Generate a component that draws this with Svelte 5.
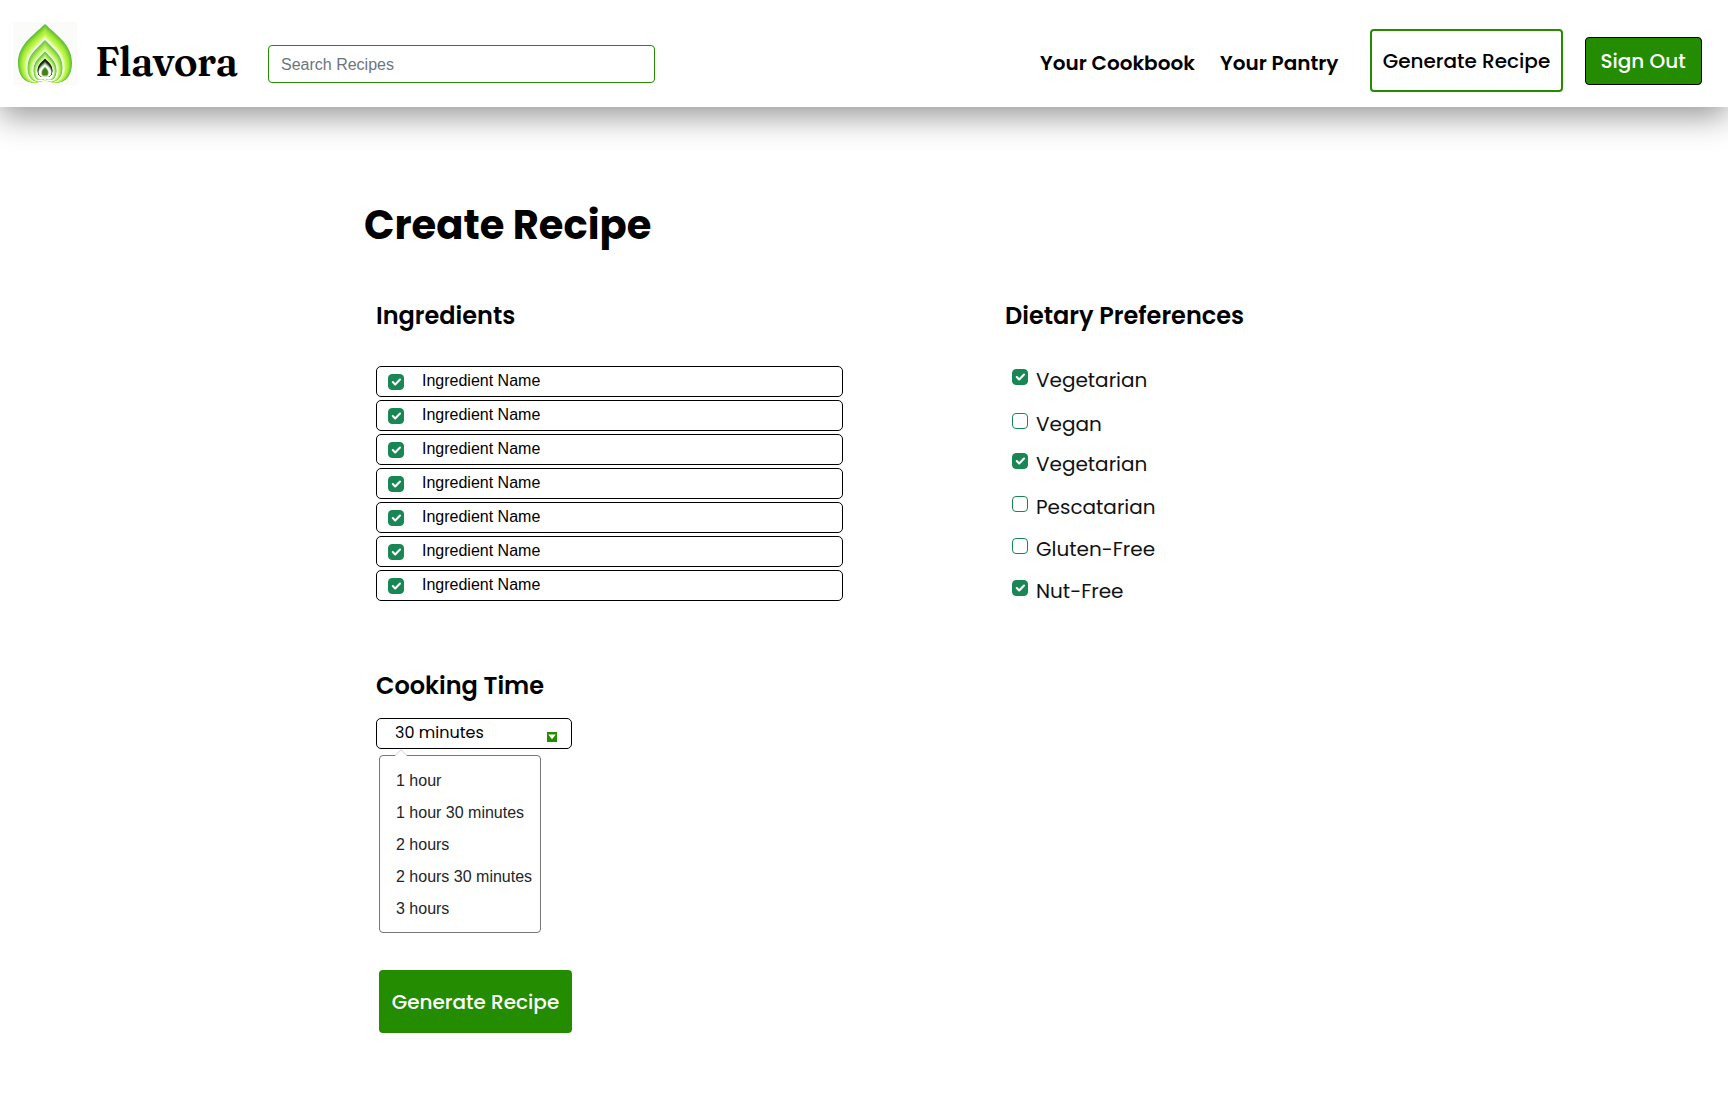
<script>
  const ingredients = Array(7).fill('Ingredient Name');
  const diets = [
    { name: 'Vegetarian', on: true },
    { name: 'Vegan', on: false },
    { name: 'Vegetarian', on: true },
    { name: 'Pescatarian', on: false },
    { name: 'Gluten-Free', on: false },
    { name: 'Nut-Free', on: true }
  ];
  const times = ['1 hour', '1 hour 30 minutes', '2 hours', '2 hours 30 minutes', '3 hours'];

  // Each petal fades from its outline colour to white: top, half width, bottom.
  const petals = [
    { top: 2, w: 27, bottom: 60.5, inTop: 17, inW: 18, inBottom: 60, stops: [[98, 188, 62], [160, 232, 50], [196, 250, 84], [255, 255, 255]] },
    { top: 18, w: 17.5, bottom: 59.5, inTop: 30, inW: 12, inBottom: 59, stops: [[110, 192, 80], [160, 230, 70], [205, 250, 130], [255, 255, 255]] },
    { top: 29.5, w: 11.5, bottom: 58, inTop: 37, inW: 8, inBottom: 57, stops: [[100, 186, 76], [150, 224, 76], [205, 244, 150], [255, 255, 255]] },
    { top: 36.5, w: 7.4, bottom: 54.5, inTop: 43, inW: 5.8, inBottom: 54.5, stops: [[28, 40, 22], [30, 42, 24], [150, 180, 130], [255, 255, 255]] },
    { top: 44.5, w: 3.6, bottom: 54, inTop: 48, inW: 1.5, inBottom: 52, stops: [[190, 225, 150], [90, 160, 40], [60, 125, 20], [70, 130, 30]] }
  ];
  const steps = 12;
  const layers = petals.flatMap((p) =>
    Array.from({ length: steps + 1 }, (_, i) => {
      const t = i / steps;
      const seg = Math.min(2, Math.floor(t * 3));
      const f = t * 3 - seg;
      const c = p.stops[seg].map((v, k) => Math.round(v + (p.stops[seg + 1][k] - v) * f));
      const top = p.top + (p.inTop - p.top) * t;
      const w = p.w + (p.inW - p.w) * t;
      const bottom = p.bottom + (p.inBottom - p.bottom) * t;
      return { fill: `rgb(${c.join(',')})`, transform: `translate(32 ${top}) scale(${w} ${bottom - top})` };
    })
  );
</script>

{#snippet check(on)}
  <span class="check" class:on>
    {#if on}
      <svg viewBox="0 0 20 20" width="16" height="16"><path d="M6 10l3 3 6-6" /></svg>
    {/if}
  </span>
{/snippet}

<header>
  <svg class="logo" viewBox="0 0 64 63" width="64" height="63">
    <rect width="64" height="63" fill="#fbfcfa" />
    {#each layers as l}
      <path d="M0 0C.5 .22 1 .36 1 .67C1 .88 .76 1 .46 1C.22 1 .06 .98 0 .95C-.06 .98 -.22 1 -.46 1C-.76 1 -1 .88 -1 .67C-1 .36 -.5 .22 0 0Z" fill={l.fill} transform={l.transform} />
    {/each}
  </svg>
  <span class="brand">Flavora</span>
  <div class="search">Search Recipes</div>
  <nav>
    <a class="cookbook" href="#cookbook">Your Cookbook</a>
    <a class="pantry" href="#pantry">Your Pantry</a>
    <button class="generate outline">Generate Recipe</button>
    <button class="signout">Sign Out</button>
  </nav>
</header>

<main>
  <h1>Create Recipe</h1>
  <div class="columns">
    <section class="left">
      <h2>Ingredients</h2>
      <ul class="ingredients">
        {#each ingredients as name}
          <li>{@render check(true)}<span>{name}</span></li>
        {/each}
      </ul>
      <h2 class="h-time">Cooking Time</h2>
      <div class="select">
        <span>30 minutes</span>
        <svg viewBox="0 0 10 10" width="10" height="10"><rect width="10" height="10" fill="#248c00" /><path d="M1.2 2.6h7.6L5 7.2z" fill="#fff" /></svg>
      </div>
      <div class="menu">
        <svg class="notch" viewBox="0 0 14 8" width="14" height="8"><path d="M1 7L7 1l6 6v1H1z" fill="#fff" /><path d="M1 6.6L7 .8l6 5.8" fill="none" stroke="#d0d0d0" /></svg>
        {#each times as time}<div>{time}</div>{/each}
      </div>
      <button class="generate solid">Generate Recipe</button>
    </section>
    <section>
      <h2>Dietary Preferences</h2>
      <ul class="diets">
        {#each diets as d}
          <li>{@render check(d.on)}<span>{d.name}</span></li>
        {/each}
      </ul>
    </section>
  </div>
</main>

<style>
  :global(body) { background: #fff; overflow: hidden; }
  :global(#app) { font-family: Poppins, Inter, sans-serif; color: #000; }
  header {
    display: flex; align-items: flex-start; box-sizing: border-box;
    height: 107px; padding: 0 26px 0 13px; background: #fff;
    box-shadow: 0 9px 30px rgba(0, 0, 0, 0.42);
  }
  .logo { margin-top: 22px; flex: none; }
  .brand {
    width: 173px; margin: 38px 0 0 18px; flex: none;
    font: 600 40px/48px Fraunces, "Liberation Serif", serif; letter-spacing: -0.75px;
  }
  .search {
    box-sizing: border-box; width: 387px; height: 38px; margin-top: 45px; padding: 1px 12px 0;
    border: 1px solid #248c00; border-radius: 4px;
    font: 16px/36px "Helvetica Neue", "Liberation Sans", sans-serif; color: #6c757d;
  }
  nav { display: flex; align-items: flex-start; margin-left: auto; }
  nav a { margin-top: 51px; font-size: 20px; font-weight: 600; line-height: 24px; color: #000; text-decoration: none; white-space: nowrap; }
  .cookbook { width: 180px; }
  .pantry { width: 150px; }
  button {
    display: flex; align-items: center; justify-content: center; box-sizing: border-box;
    padding: 0; border-radius: 4px; white-space: nowrap;
    font: 500 20px/24px Poppins, Inter, sans-serif;
  }
  .generate { width: 193px; height: 63px; }
  .outline { margin-top: 29px; border: 2px solid #248c00; background: #fff; color: #000; }
  .signout { width: 117px; height: 48px; margin: 37px 0 0 22px; padding: 0 1px 1px 0; border: 1px solid #000; background: #248c00; color: #fff; }
  .solid { margin: 37px 0 0 3px; border: 0; background: #248c00; color: #fff; }

  main { padding: 88px 0 0 364px; }
  h1 { margin: 0; font-size: 40px; line-height: 60px; font-weight: 700; }
  .columns { display: flex; margin: 43px 0 0 12px; }
  .left { width: 629px; }
  h2 { margin: 0; font-size: 24px; line-height: 36px; font-weight: 600; white-space: nowrap; }
  .h-time { margin-top: 67px; }
  ul { margin: 0; padding: 0; list-style: none; }
  .ingredients { display: grid; gap: 3px; width: 467px; margin-top: 32px; }
  .ingredients li {
    display: flex; align-items: center; gap: 18px; box-sizing: border-box; height: 31px; padding: 1px 0 0 11px;
    border: 1px solid #000; border-radius: 5px; font: 16px/24px "Helvetica Neue", "Liberation Sans", sans-serif;
  }
  .ingredients li span:last-child { padding-bottom: 3px; }
  .check {
    display: block; flex: none; box-sizing: border-box; width: 16px; height: 16px;
    border: 1px solid #198754; border-radius: 4px;
  }
  .check.on { background: #198754; }
  .check svg { display: block; margin: -1px; }
  .check path { fill: none; stroke: #fff; stroke-width: 2.6; stroke-linecap: round; stroke-linejoin: round; }
  .diets { display: grid; grid-template-rows: 44px 40px 43px 42px 42px 42px; margin: 34px 0 0 7px; }
  .diets li { display: flex; align-items: flex-start; gap: 8px; font-size: 20px; line-height: 24px; color: #111; }
  .diets .check { margin-top: 1px; }
  .select {
    display: flex; align-items: flex-start; justify-content: space-between; box-sizing: border-box;
    width: 196px; height: 31px; margin-top: 14px; padding: 2px 14px 0 18px;
    border: 1px solid #000; border-radius: 5px; font-size: 16px; line-height: 24px;
  }
  .select svg { margin-top: 11px; }
  .menu {
    position: relative; box-sizing: border-box; width: 162px; height: 178px; margin: 6px 0 0 3px; padding: 9px 0 0 16px;
    border: 1px solid #777; border-radius: 4px; font: 16px/32px "Helvetica Neue", "Liberation Sans", sans-serif; color: #212529; white-space: nowrap;
  }
  .notch { position: absolute; left: 14px; top: -7px; }
</style>
